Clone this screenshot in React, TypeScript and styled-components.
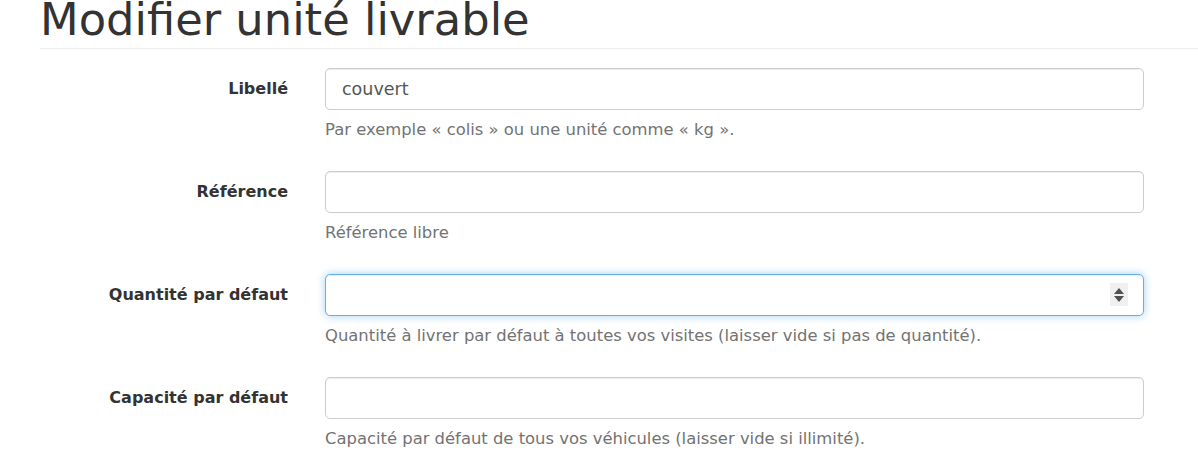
import React from "react";
import styled, { createGlobalStyle } from "styled-components";

const Global = createGlobalStyle`
  html, body { margin: 0; padding: 0; background: #fff; }
  body {
    font-family: "DejaVu Sans", Verdana, sans-serif;
    color: #333;
    font-size: 17.5px;
  }
  * { box-sizing: border-box; }
`;

const Page = styled.div`
  padding-left: 40px;
  width: 1198px;
  overflow: hidden;
`;

const Header = styled.div`
  border-bottom: 1px solid #eee;
  padding-bottom: 8px;
`;

const Title = styled.h1`
  margin: 0;
  font-size: 44.8px;
  line-height: 40px;
  font-weight: 400;
  color: #333;
  white-space: nowrap;
`;

const Form = styled.form`
  margin-top: 19px;
  display: flex;
  flex-direction: column;
  gap: 29px;
`;

const Row = styled.div`
  display: grid;
  grid-template-columns: 248px 819px;
  column-gap: 37px;
  align-items: start;
`;

const Label = styled.label`
  text-align: right;
  font-weight: 700;
  font-size: 16px;
  line-height: 42px;
  color: #333;
  white-space: nowrap;
`;

const Field = styled.div`
  display: flex;
  flex-direction: column;
`;

const InputWrap = styled.div`
  position: relative;
`;

const Input = styled.input<{ $focused?: boolean }>`
  display: block;
  width: 100%;
  height: 42px;
  padding: 0 16px;
  font-family: "DejaVu Sans", Verdana, sans-serif;
  font-size: 17.5px;
  color: #555;
  background: #fff;
  border: 1px solid ${(p) => (p.$focused ? "#66afe9" : "#ccc")};
  border-radius: 5px;
  outline: none;
  box-shadow: ${(p) =>
    p.$focused
      ? "inset 0 1px 1px rgba(0,0,0,.075), 0 0 8px rgba(102,175,233,.6)"
      : "inset 0 1px 1px rgba(0,0,0,.075)"};
`;

const Spinner = styled.div`
  position: absolute;
  right: 16px;
  top: 9px;
  width: 18px;
  height: 23px;
  background: #f0f0f0;
  display: flex;
  flex-direction: column;
  align-items: center;
  justify-content: center;
  gap: 2px;
`;

const Arrow = styled.span<{ $down?: boolean }>`
  width: 0;
  height: 0;
  border-left: 5px solid transparent;
  border-right: 5px solid transparent;
  ${(p) =>
    p.$down
      ? "border-top: 6px solid #505050;"
      : "border-bottom: 6px solid #505050;"}
`;

const Help = styled.span`
  display: block;
  margin-top: 8px;
  line-height: 24px;
  font-size: 16.4px;
  color: #737373;
  white-space: nowrap;
`;

type RowDef = { label: string; value?: string; help: string; focused?: boolean };

const rows: RowDef[] = [
  { label: "Libellé", value: "couvert", help: "Par exemple « colis » ou une unité comme « kg »." },
  { label: "Référence", help: "Référence libre" },
  {
    label: "Quantité par défaut",
    help: "Quantité à livrer par défaut à toutes vos visites (laisser vide si pas de quantité).",
    focused: true,
  },
  {
    label: "Capacité par défaut",
    help: "Capacité par défaut de tous vos véhicules (laisser vide si illimité).",
  },
];

export default function App() {
  return (
    <Page>
      <Global />
      <Header>
        <Title>Modifier unité livrable</Title>
      </Header>
      <Form onSubmit={(e) => e.preventDefault()}>
        {rows.map((r) => (
          <Row key={r.label}>
            <Label>{r.label}</Label>
            <Field>
              <InputWrap>
                <Input type="text" defaultValue={r.value ?? ""} $focused={r.focused} />
                {r.focused && (
                  <Spinner>
                    <Arrow />
                    <Arrow $down />
                  </Spinner>
                )}
              </InputWrap>
              <Help>{r.help}</Help>
            </Field>
          </Row>
        ))}
      </Form>
    </Page>
  );
}
